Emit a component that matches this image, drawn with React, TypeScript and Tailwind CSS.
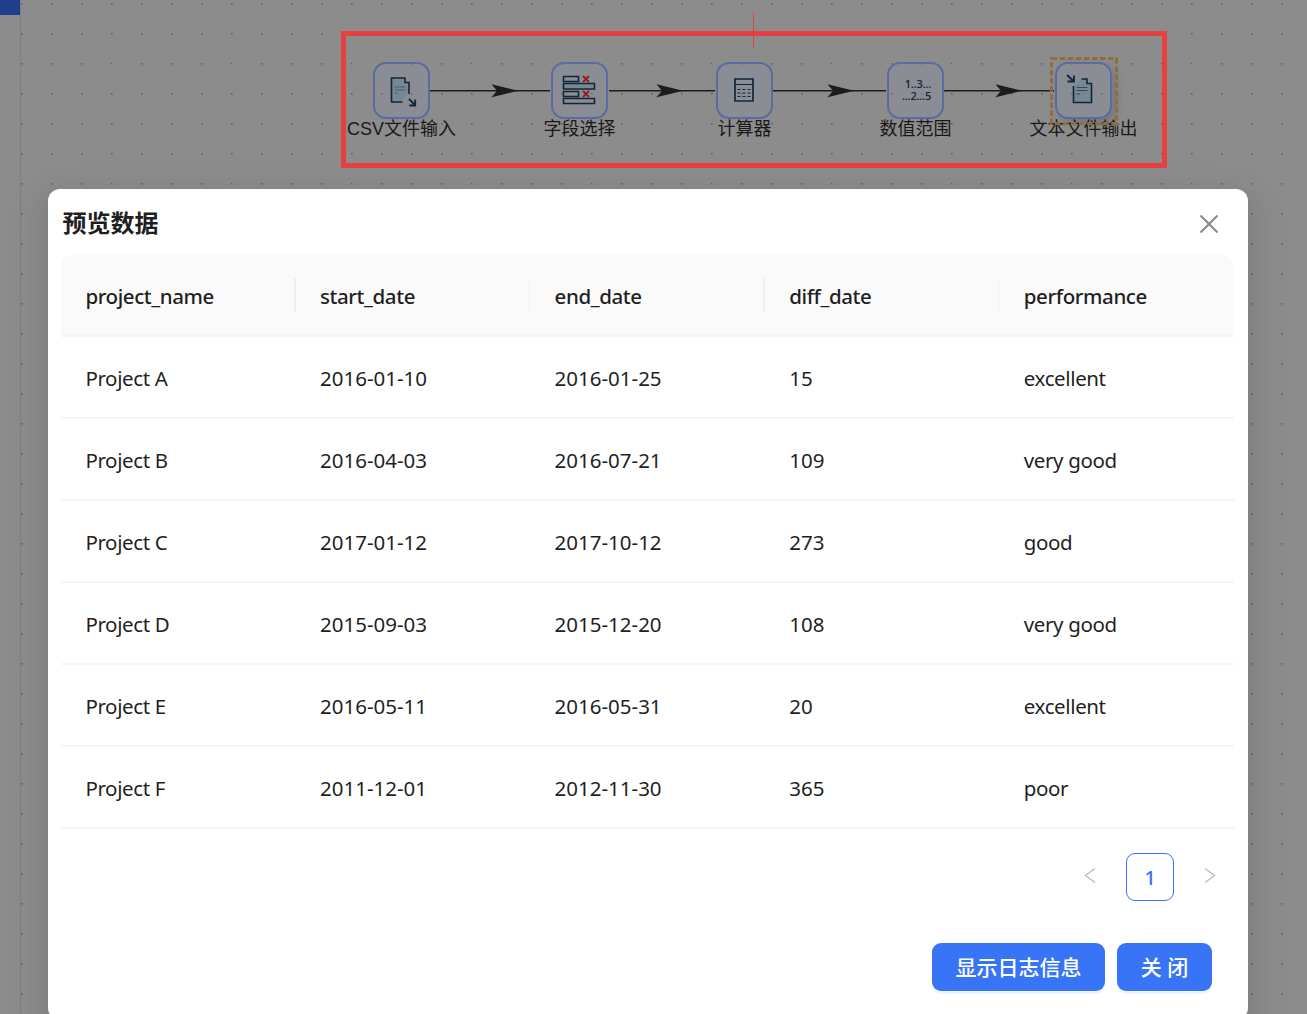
import { ReactNode } from 'react';

const columns = ['project_name', 'start_date', 'end_date', 'diff_date', 'performance'];

const rows = [
  ['Project A', '2016-01-10', '2016-01-25', '15', 'excellent'],
  ['Project B', '2016-04-03', '2016-07-21', '109', 'very good'],
  ['Project C', '2017-01-12', '2017-10-12', '273', 'good'],
  ['Project D', '2015-09-03', '2015-12-20', '108', 'very good'],
  ['Project E', '2016-05-11', '2016-05-31', '20', 'excellent'],
  ['Project F', '2011-12-01', '2012-11-30', '365', 'poor'],
];

interface FlowNodeProps {
  label: string;
  position: string;
  selected?: boolean;
  children: ReactNode;
}

function FlowNode({ label, position, selected = false, children }: FlowNodeProps) {
  return (
    <div className={`absolute top-[62px] flex w-[57px] flex-col items-center ${position}`}>
      <div
        className={`h-[57px] w-[57px] rounded-[13px] border-2 border-[#5a6ba0] bg-[#8090b0]/20 ${
          selected ? 'shadow-[4px_4px_8px_rgba(0,0,0,0.16)]' : ''
        }`}
      >
        {children}
      </div>
      <span className="-mt-[2px] whitespace-nowrap font-['Liberation_Sans','Noto_Sans_CJK_SC',sans-serif] text-[18px] leading-[24px] text-[#191919]">
        {label}
      </span>
      {selected && (
        <svg className="absolute -left-[5px] -top-[5px]" width="68" height="68" fill="none">
          <rect x="1.5" y="1.5" width="65" height="65" stroke="#8f6c41" strokeWidth="3" strokeDasharray="5.5 2.6" />
        </svg>
      )}
    </div>
  );
}

function CsvInputIcon() {
  return (
    <svg className="-ml-px -mt-px" width="54" height="54" viewBox="0 0 54 54" fill="none">
      <path d="M17.5 15h13v4h4v11l-8 9h-9z" fill="#768893" />
      <path d="M35 31V19.5h-4V15H17.5v24h11" stroke="#12263a" strokeWidth="1.6" />
      <path d="M20.5 24h11M20.5 27h11M20.5 30h4" stroke="#4e5f6d" strokeWidth="1.2" />
      <path d="M35 36l6 6M41.2 36.5v6h-6" stroke="#12263a" strokeWidth="1.8" />
    </svg>
  );
}

function SelectFieldsIcon() {
  return (
    <svg className="-ml-px -mt-px" width="54" height="54" viewBox="0 0 54 54" fill="none">
      <g stroke="#12263a" strokeWidth="1.6">
        <path d="M11.5 13.5h15v5h-15zM11.5 28.5h15v5h-15zM11.5 35.5h31v5h-31z" />
        <path d="M11.5 20.5h31v5.5h-31z" fill="#768893" />
      </g>
      <path d="M31 13l6 6M37 13l-6 6M31 28l6 6M37 28l-6 6" stroke="#9b1822" strokeWidth="1.8" />
    </svg>
  );
}

function CalculatorIcon() {
  return (
    <svg className="-ml-px -mt-px" width="54" height="54" viewBox="0 0 54 54" fill="none" stroke="#12263a">
      <path d="M18 16h18v22H18z" strokeWidth="1.7" />
      <path d="M18 21.5h18" strokeWidth="1" />
      <path d="M20.5 26.5h14M20.5 30h14M20.5 33.5h14" strokeWidth="1.1" strokeDasharray="3 2" />
    </svg>
  );
}

function TextOutputIcon() {
  return (
    <svg className="-ml-px -mt-px" width="54" height="54" viewBox="0 0 54 54" fill="none">
      <path d="M17.5 24l8-8h5v4.500h5v19h-18z" fill="#768893" />
      <path d="M17.5 23v16.5h18v-19H31V16h-5.5" stroke="#12263a" strokeWidth="1.6" />
      <path d="M20.5 24.5h11M20.5 27.5h11M20.5 31h3.5" stroke="#34485a" strokeWidth="1" />
      <path d="M11 12l6.5 6M18 12.5v6h-6.5" stroke="#12263a" strokeWidth="1.8" />
    </svg>
  );
}

// Arrow tips sit a little past the middle of each hop
const hops = [
  { from: 430, to: 550, tip: 518 },
  { from: 609, to: 715, tip: 683 },
  { from: 773, to: 886, tip: 854 },
  { from: 944, to: 1054, tip: 1022 },
];

function Canvas() {
  return (
    <div className="absolute inset-0 bg-[#8c8c8c]">
      <div className="absolute left-0 top-0 h-[15px] w-5 bg-[#1f3f8c]" />
      <svg className="absolute inset-0" width="1307" height="1014">
        <defs>
          <pattern id="dots" x="21" y="3" width="30" height="30" patternUnits="userSpaceOnUse">
            <rect width="2" height="2" fill="#777" />
            <rect width="1" height="1" fill="#606060" />
          </pattern>
        </defs>
        <path d="M20.5 0V1014" stroke="#808080" />
        <rect x="21" width="1286" height="1014" fill="url(#dots)" />
        {hops.map((hop) => (
          <g key={hop.from}>
            <path d={`M${hop.from} 90.7H${hop.to}`} stroke="#1c1c1c" strokeWidth="1.5" />
            <path d={`M${hop.tip} 90.7l-26.5 -6.5l5.5 6.5l-5.5 6.5z`} fill="#1c1c1c" />
          </g>
        ))}
      </svg>
      <FlowNode label="CSV文件输入" position="left-[373px]">
        <CsvInputIcon />
      </FlowNode>
      <FlowNode label="字段选择" position="left-[551px]">
        <SelectFieldsIcon />
      </FlowNode>
      <FlowNode label="计算器" position="left-[716px]">
        <CalculatorIcon />
      </FlowNode>
      <FlowNode label="数值范围" position="left-[887px]">
        <p className="pr-[11px] pt-[14px] text-right font-['Open_Sans',sans-serif] text-[11px] font-semibold leading-[12px] tracking-[-0.2px] text-[#12263a]">
          1..3...
          <br />
          ...2...5
        </p>
      </FlowNode>
      <FlowNode label="文本文件输出" position="left-[1055px]" selected>
        <TextOutputIcon />
      </FlowNode>
      <div className="absolute left-[341px] top-[31px] h-[137px] w-[826px] border-[5px] border-[#e84040]" />
      <div className="absolute left-[753px] top-[13px] h-[35px] w-px bg-[#e84040]" />
    </div>
  );
}

function PreviewTable() {
  return (
    <div className="ml-[13px] mr-[14px] text-[20.5px] text-[#1f1f1f]">
      <div className="grid h-[82px] grid-cols-5 rounded-t-xl border-b-2 border-[#f5f5f5] bg-[#fafafa] font-medium tracking-[-0.4px]">
        {columns.map((col, i) => (
          <div key={col} className="flex items-center">
            <span className="flex-1 pl-[24.4px] pt-1">{col}</span>
            {i < columns.length - 1 && <span className="h-[34px] w-[1.5px] bg-[#f0f0f0]" />}
          </div>
        ))}
      </div>
      {rows.map((row) => (
        <div key={row[0]} className="grid h-[82px] grid-cols-5 items-center border-b-2 border-[#f5f5f5] pt-1">
          {row.map((cell, i) => (
            <span key={i} className={i === 0 || i === 4 ? 'pl-[24.4px] tracking-[-0.37px]' : 'pl-[24.4px]'}>
              {cell}
            </span>
          ))}
        </div>
      ))}
    </div>
  );
}

function Pagination() {
  return (
    <div className="mr-[14px] mt-6 flex h-12 items-center justify-end">
      <button className="flex h-12 w-12 items-center justify-center pb-[3px]">
        <svg width="12" height="16" fill="none" stroke="#bfbfbf" strokeWidth="1.5">
          <path d="M11 1.5L1.5 8.5l9.5 7" />
        </svg>
      </button>
      <button className="mx-3 h-12 w-12 rounded-[9px] border-[1.5px] border-[#3875f6] pt-0.5 text-[20.5px] font-medium text-[#3875f6]">
        1
      </button>
      <button className="flex h-12 w-12 items-center justify-center pb-[3px]">
        <svg width="12" height="16" fill="none" stroke="#bfbfbf" strokeWidth="1.5">
          <path d="M1 1.5l9.5 7l-9.5 7" />
        </svg>
      </button>
    </div>
  );
}

export default function App() {
  return (
    <div className="relative h-[1014px] w-[1307px] overflow-hidden font-['Noto_Sans','Noto_Sans_CJK_SC',sans-serif]">
      <Canvas />
      <div className="absolute left-12 top-[188.5px] h-[831px] w-[1200px] rounded-xl bg-white shadow-[0_9px_24px_rgba(0,0,0,0.08),0_4px_9px_-6px_rgba(0,0,0,0.12),0_14px_42px_12px_rgba(0,0,0,0.05)]">
        <div className="flex h-[66px] items-center justify-between pl-[14.5px] pr-[30px] pt-1">
          <h2 className="-mt-px text-[24px] font-bold text-[#1f1f1f]">预览数据</h2>
          <button>
            <svg width="18" height="18" fill="none" stroke="#888" strokeWidth="2">
              <path d="M0.5 0.5l17 17M17.5 0.5l-17 17" />
            </svg>
          </button>
        </div>
        <PreviewTable />
        <Pagination />
        <div className="mr-9 mt-[42px] flex justify-end gap-3 text-[21px] font-medium text-white">
          <button className="h-12 w-[173px] rounded-[9px] bg-[#3875f6] pt-[3px] shadow-[0_3px_0_rgba(5,145,255,0.08)]">
            显示日志信息
          </button>
          <button className="h-12 w-[95px] rounded-[9px] bg-[#3875f6] pt-[3px] shadow-[0_3px_0_rgba(5,145,255,0.08)]">
            关 闭
          </button>
        </div>
      </div>
    </div>
  );
}
